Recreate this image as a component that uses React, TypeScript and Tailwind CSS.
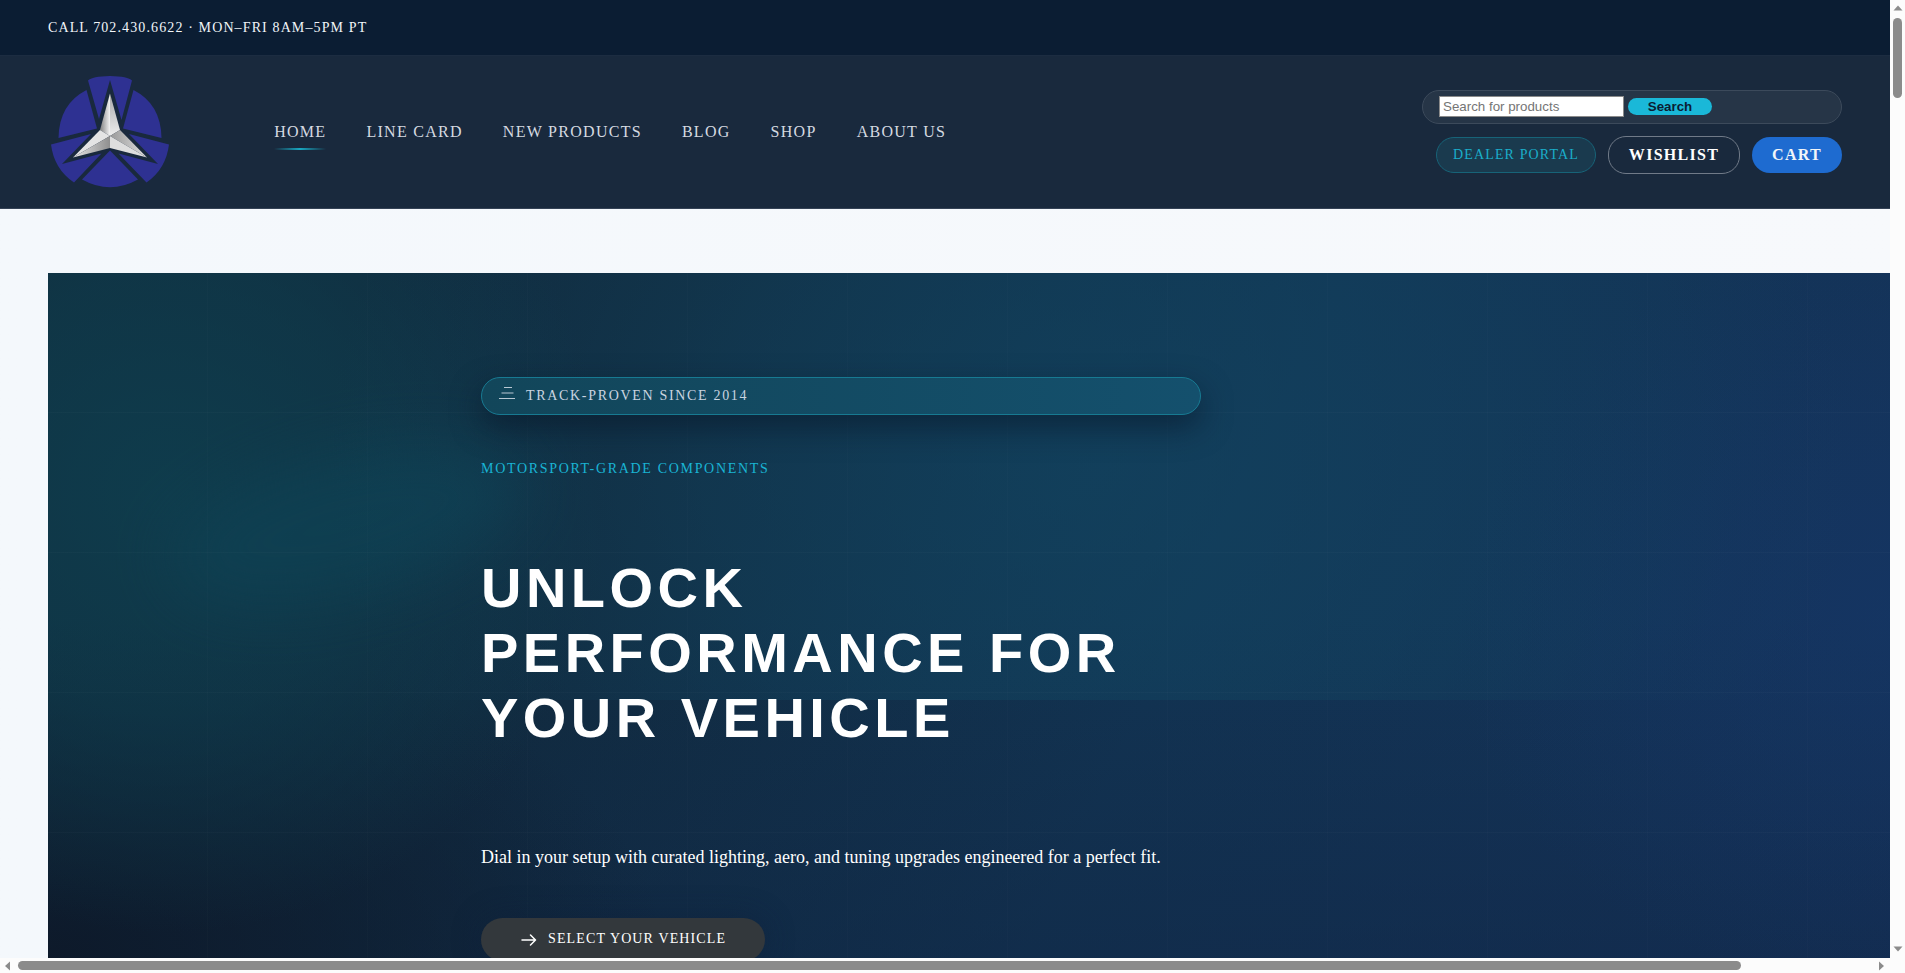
import type { ReactNode } from "react";

const NAV = ["Line Card", "New Products", "Blog", "Shop", "About Us"];

function Logo() {
  return (
    <svg className="h-[113px] w-[120px]" viewBox="0 0 120 113" aria-hidden="true">
      <defs>
        <linearGradient id="blade-l" x1="0" x2="1">
          <stop offset="0.1" stopColor="#8c8c8c" />
          <stop offset="1" stopColor="#f4f4f4" />
        </linearGradient>
        <linearGradient id="blade-r" x1="0" x2="0" y1="0" y2="1">
          <stop offset="0" stopColor="#a8a8a8" />
          <stop offset="1" stopColor="#ededed" />
        </linearGradient>
        <linearGradient id="facet-dark" x1="0" x2="1">
          <stop offset="0" stopColor="#e6e6e6" />
          <stop offset="1" stopColor="#8f8f8f" />
        </linearGradient>
        <linearGradient id="facet-dark-r" x1="0" x2="1">
          <stop offset="0" stopColor="#999999" />
          <stop offset="1" stopColor="#e0e0e0" />
        </linearGradient>
      </defs>
      <g fill="#2e3192">
        <path d="M38 4.500Q42 0.300 60 0Q78 0.300 82 4.500L71.500 44L60 4L49 43Z" />
        <path d="M36.500 14Q9 28 8.500 62L47 52.500Z" />
        <path d="M83.500 14Q111 28 111.500 62L73 52.500Z" />
        <path d="M1 68.500L41 58L12 88L51.500 77.500L24 106.500Q4 93 1 68.500Z" />
        <path d="M119 68.500L79 58L108 88L68.500 77.500L96.500 106.500Q116 93 119 68.500Z" />
        <path d="M60 74.500L88 103.500Q60 119 32 103.500Z" />
      </g>
      <path d="M60 17.500L50 54L60 60Z" fill="url(#blade-l)" />
      <path d="M60 17.500L70 54L60 60Z" fill="url(#blade-r)" />
      <path d="M50 54L60 60L23 81.500Z" fill="#e4e4e4" />
      <path d="M60 60V72L23 81.500Z" fill="url(#facet-dark)" />
      <path d="M70 54L60 60L97 81.500Z" fill="url(#facet-dark-r)" />
      <path d="M60 60V72L97 81.500Z" fill="#dedede" />
    </svg>
  );
}

function Arrow({ d, className }: { d: string; className: string }) {
  return (
    <svg className={className} viewBox="0 0 10 10" fill="#8b8b8b" aria-hidden="true">
      <path d={d} />
    </svg>
  );
}

function Header() {
  return (
    <header className="shrink-0">
      <div className="flex h-[55px] items-center bg-[#0b1d33] pl-12 text-sm tracking-[0.08em] text-[#f1f5f9]">
        <span>CALL 702.430.6622 · MON–FRI 8AM–5PM PT</span>
      </div>
      <div className="flex h-[154px] items-center border-t border-b border-t-[#1c2c41] border-b-[#344256] bg-[#19293d] pr-12 pl-[50px]">
        <Logo />
        <nav className="mb-[2px] ml-[104.2px] flex gap-10 text-[16px] leading-[19px] tracking-[1.28px] text-[#d5dae1] uppercase">
          <a className="relative">
            Home
            <span className="absolute -bottom-[9px] left-0 h-[2px] w-full bg-linear-to-r from-transparent via-[#18a8c2] to-transparent" />
          </a>
          {NAV.map((n) => (
            <a key={n}>{n}</a>
          ))}
        </nav>
        <div className="ml-auto flex flex-col items-end gap-3">
          <div className="flex h-[34px] w-[420px] items-center gap-1 rounded-full border border-[#3c4a5b] bg-[#263547] px-4 font-['Liberation_Sans',sans-serif] text-[13.333px]">
            <div className="mb-px flex h-[21px] w-[185px] items-center border border-[#8a8a8a] bg-white pl-[3px] text-[#757575]">
              Search for products
            </div>
            <div className="mb-px flex h-[17px] w-[84px] items-center justify-center rounded-full bg-[#1ab8d8] leading-[17px] font-bold text-[#0b1d33]">
              Search
            </div>
          </div>
          <div className="flex items-center gap-3">
            <Pill className="h-[36px] w-[160px] border border-[#176378] bg-[#1a3a4e] text-sm tracking-[0.08em] text-[#1aaeca]">
              DEALER PORTAL
            </Pill>
            <Pill className="h-[38px] w-[132px] border border-[#707a88] text-[16px] font-bold tracking-[1.28px] text-white">
              WISHLIST
            </Pill>
            <Pill className="h-[36px] w-[90px] bg-[#1e6bd0] text-[16px] font-bold tracking-[1.28px] text-[#f1f5f9]">
              CART
            </Pill>
          </div>
        </div>
      </div>
    </header>
  );
}

function Pill({ className, children }: { className: string; children: ReactNode }) {
  return <a className={`flex items-center justify-center rounded-[18px] whitespace-nowrap ${className}`}>{children}</a>;
}

function Hero() {
  return (
    <section className="relative isolate ml-12 h-[685px] overflow-hidden bg-[linear-gradient(115deg,#112a3b_0%,#112b3f_30%,#123453_60%,#15335c_100%)] pt-[104px] pl-[433px]">
      <div className="absolute inset-0 -z-10 bg-[linear-gradient(180deg,transparent_50%,rgba(16,36,66,0.45)_100%)]" />
      <div className="absolute inset-0 -z-10 bg-[radial-gradient(ellipse_620px_340px_at_0%_100%,rgba(13,24,40,0.9),rgba(13,26,42,0.5)_50%,transparent)]" />
      <div className="absolute inset-0 -z-10 bg-[radial-gradient(ellipse_440px_440px_at_120px_220px,rgba(14,64,80,0.8)_0%,rgba(14,64,80,0.52)_50%,transparent_100%)]" />
      <div className="absolute top-[180px] left-[120px] -z-10 h-[140px] w-[360px] -rotate-[14deg] rounded-[50%] bg-[#0e4254]/65 blur-[30px]" />
      <div className="absolute inset-x-0 top-0 -z-10 h-[427px] bg-[radial-gradient(ellipse_760px_640px_at_1040px_190px,rgba(18,72,100,0.6)_0%,rgba(18,72,100,0.36)_50%,transparent_100%)]" />
      <div className="absolute inset-0 -z-10 bg-[radial-gradient(ellipse_440px_380px_at_100%_50%,rgba(21,54,104,0.55),transparent)]" />
      <div className="absolute inset-0 -z-10 bg-[repeating-linear-gradient(90deg,transparent_0_159px,rgba(255,255,255,0.012)_159px_160px),repeating-linear-gradient(180deg,transparent_0_139px,rgba(255,255,255,0.018)_139px_140px)]" />

      <div className="flex h-[38px] w-[720px] items-center rounded-full border border-[#177a92] bg-[linear-gradient(90deg,#12465a,#14506d)] pl-4 text-sm tracking-[0.12em] text-[#cbd5e1] shadow-[0_12px_30px_rgba(8,20,38,0.55)]">
        <svg className="mb-[6px] h-[14px] w-[18px]" viewBox="0 0 18 14" stroke="#b9c8d3" strokeWidth="1.200" aria-hidden="true">
          <path d="M6 1.500H14M3.500 7H15.500M1 12.500H17" />
        </svg>
        <span className="ml-[10px]">TRACK-PROVEN SINCE 2014</span>
      </div>
      <p className="mt-[45px] text-sm leading-[17px] tracking-[0.12em] text-[#19b4d4]">MOTORSPORT-GRADE COMPONENTS</p>
      <h1 className="mt-[78px] font-['Liberation_Sans',sans-serif] text-[56px] leading-[65px] font-bold tracking-[4.48px] text-white">
        UNLOCK
        <br />
        PERFORMANCE FOR
        <br />
        YOUR VEHICLE
      </h1>
      <p className="mt-[96px] text-[18px] leading-[22px] text-white">
        Dial in your setup with curated lighting, aero, and tuning upgrades engineered for a perfect fit.
      </p>
      <a className="mt-[50px] flex h-[43px] w-[284px] items-center rounded-[22px] bg-[#33383c] pl-10 text-sm tracking-[0.08em] text-white shadow-[0_0_30px_rgba(15,30,56,0.45)]">
        <svg className="h-[12px] w-[16px]" viewBox="0 0 16 12" fill="none" stroke="white" strokeWidth="1.500" strokeLinecap="round" strokeLinejoin="round" aria-hidden="true">
          <path d="M1 6H14.500M9.500 1L14.500 6L9.500 11" />
        </svg>
        <span className="mb-[2px] ml-[11px]">SELECT YOUR VEHICLE</span>
      </a>
    </section>
  );
}

export default function App() {
  return (
    <div className="flex h-[973px] w-[1905px] flex-col overflow-hidden bg-[#fcfcfc] font-['Liberation_Serif',serif]">
      <div className="flex h-[958px]">
        <div className="flex w-[1890px] flex-col overflow-hidden bg-linear-to-r from-[#f4f8fc] to-[#f7f9fc]">
          <Header />
          <main className="pt-16">
            <Hero />
          </main>
        </div>
        <div className="flex w-[15px] flex-col items-center justify-between pt-[5px] pb-[4px]">
          <div className="flex flex-col items-center gap-[5px]">
            <Arrow d="M0.500 7.500L5 2.500L9.500 7.500Z" className="-mt-0.5 size-[10px]" />
            <div className="h-[80px] w-[9px] rounded-full bg-[#8b8b8b]" />
          </div>
          <Arrow d="M0.500 2.500L5 7.500L9.500 2.500Z" className="size-[10px]" />
        </div>
      </div>
      <div className="flex h-[15px] w-[1890px] items-center justify-between pr-[4px] pl-[3px]">
        <div className="flex items-center gap-[5px]">
          <Arrow d="M7 0.500L2 5L7 9.500Z" className="size-[10px]" />
          <div className="h-[9px] w-[1723px] rounded-full bg-[#8b8b8b]" />
        </div>
        <Arrow d="M3 0.500L8 5L3 9.500Z" className="size-[10px]" />
      </div>
    </div>
  );
}
